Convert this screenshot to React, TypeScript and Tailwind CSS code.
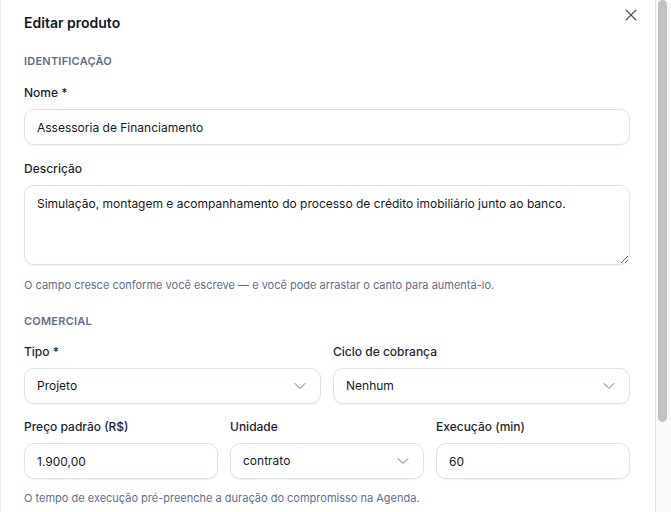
import { X, ChevronDown } from 'lucide-react';

function Label({ children }: { children: React.ReactNode }) {
  return <label className="block text-[12px] leading-[17px] font-medium text-[#1e2433]">{children}</label>;
}

function SectionTitle({ children, className }: { children: React.ReactNode; className?: string }) {
  return (
    <h3 className={`text-[11px] leading-[14px] font-semibold uppercase tracking-[0.02em] text-[#5f6e8c] ${className ?? ''}`}>
      {children}
    </h3>
  );
}

const field =
  'mt-2 h-9 w-full rounded-[10px] border border-[#dbe2ee] bg-white px-3 text-[12px] text-[#151a24] shadow-[0_1px_2px_rgba(16,24,40,0.06)] outline-none';

function Select({ value }: { value: string }) {
  return (
    <button type="button" className={`${field} flex items-center justify-between text-left`}>
      <span>{value}</span>
      <ChevronDown size={20} strokeWidth={1.2} className="text-[#6b7280] -mr-[2px]" />
    </button>
  );
}

export default function App() {
  return (
    <div className="flex h-[512px] overflow-hidden bg-white font-[Inter,sans-serif]">
      <div className="relative min-w-0 flex-1 border-l border-[#eef0f4] pl-[23px] pr-[25px] pt-[11px]">
        <h2 className="text-[14px] leading-6 font-semibold text-[#121826]">Editar produto</h2>
        <button type="button" className="absolute right-[14px] top-[5px] text-[#4b5563]" aria-label="Fechar">
          <X size={20} strokeWidth={1.4} />
        </button>

        <SectionTitle className="mt-[19px]">Identificação</SectionTitle>

        <div className="mt-4">
          <Label>Nome *</Label>
          <input className={field} defaultValue="Assessoria de Financiamento" />
        </div>

        <div className="mt-[15px]">
          <Label>Descrição</Label>
          <textarea
            className="mt-2 block h-20 w-full resize-y rounded-[10px] border border-[#dbe2ee] bg-white px-3 py-[9px] text-[12px] leading-[18px] text-[#151a24] shadow-[0_1px_2px_rgba(16,24,40,0.06)] outline-none"
            defaultValue="Simulação, montagem e acompanhamento do processo de crédito imobiliário junto ao banco."
          />
          <p className="mt-3 text-[11px] leading-4 text-[#5f6e8c]">
            O campo cresce conforme você escreve — e você pode arrastar o canto para aumentá-lo.
          </p>
        </div>

        <SectionTitle className="mt-[21px]">Comercial</SectionTitle>

        <div className="mt-[15px] grid grid-cols-2 gap-3">
          <div>
            <Label>Tipo *</Label>
            <Select value="Projeto" />
          </div>
          <div>
            <Label>Ciclo de cobrança</Label>
            <Select value="Nenhum" />
          </div>
        </div>

        <div className="mt-[14px] grid grid-cols-3 gap-3">
          <div>
            <Label>Preço padrão (R$)</Label>
            <input className={field} defaultValue="1.900,00" />
          </div>
          <div>
            <Label>Unidade</Label>
            <Select value="contrato" />
          </div>
          <div>
            <Label>Execução (min)</Label>
            <input className={field} defaultValue="60" />
          </div>
        </div>
        <p className="mt-[11px] text-[11px] leading-4 text-[#5f6e8c]">
          O tempo de execução pré-preenche a duração do compromisso na Agenda.
        </p>
      </div>

      {/* scrollbar */}
      <div className="w-4 shrink-0 border-l border-[#e6e6e6] bg-[#fafafa] pl-[2px]">
        <div className="h-[422px] w-[9px] rounded-full bg-[#c2c2c2]" />
      </div>
    </div>
  );
}
